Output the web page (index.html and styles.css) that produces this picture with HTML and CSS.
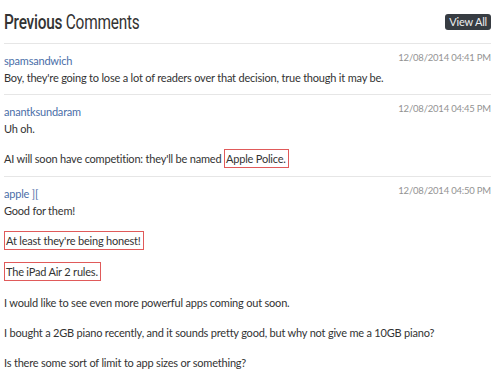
FILE: index.html
```html
<!DOCTYPE html>
<html lang="en">
<head>
    <meta charset="UTF-8">
    <meta name="viewport" content="width=device-width, initial-scale=1.0">
    <title>Previous Comments</title>
    <link rel="stylesheet" href="styles.css">
</head>
<body>
    <div class="container">
        <div class="comments-header">
            <h2 class="comments-title"><b>Previous</b> Comments</h2>
            <a href="#" class="button">View All</a>
        </div>

        <div class="comment">
            <div class="comment-meta">
                <a href="#" class="comment-author">spamsandwich</a>
                <span class="comment-date">12/08/2014 04:41 PM</span>
            </div>
            <p>Boy, they're going to lose a lot of readers over that decision, true though it may be.</p>
        </div>

        <div class="comment">
            <div class="comment-meta">
                <a href="#" class="comment-author">anantksundaram</a>
                <span class="comment-date">12/08/2014 04:45 PM</span>
            </div>
            <p>Uh oh.</p>
            <p>AI will soon have competition: they'll be named <span class="marked">Apple Police.</span></p>
        </div>

        <div class="comment">
            <div class="comment-meta">
                <a href="#" class="comment-author">apple ][</a>
                <span class="comment-date">12/08/2014 04:50 PM</span>
            </div>
            <p>Good for them!</p>
            <p><span class="marked">At least they're being honest!</span></p>
            <p><span class="marked">The iPad Air 2 rules.</span></p>
            <p>I would like to see even more powerful apps coming out soon.</p>
            <p>I bought a 2GB piano recently, and it sounds pretty good, but why not give me a 10GB piano?</p>
            <p>Is there some sort of limit to app sizes or something?</p>
        </div>
    </div>
</body>
</html>
```

FILE: styles.css
```css
body {
    font-family: Lato, sans-serif;
    background-color: #fff;
    margin: 0;
    padding: 0;
    color: #333;
}
.container {
    padding: 0 9px 0 4px;
}
.comments-header {
    display: flex;
    justify-content: space-between;
    align-items: center;
    height: 43px;
    border-bottom: 1px solid #e6e6e6;
}
.comments-title {
    margin: 0;
    font-family: Roboto, sans-serif;
    font-size: 20px;
    font-weight: 400;
    letter-spacing: -0.3px;
    color: #333;
    transform: scaleX(0.77);
    transform-origin: left center;
    white-space: nowrap;
}
.comments-title b {
    font-weight: 500;
}
.button {
    background-color: #373c42;
    color: #eee;
    padding: 2px 4px;
    border-radius: 3px;
    font-size: 11px;
    line-height: 12px;
    letter-spacing: -0.2px;
    text-decoration: none;
    margin-top: 1px;
}
.comment {
    padding: 8px 0 8px;
    border-bottom: 1px solid #e6e6e6;
    font-size: 11px;
    line-height: 17px;
    letter-spacing: -0.2px;
}
.comment:last-child {
    border-bottom: none;
}
.comment-meta {
    display: flex;
    justify-content: space-between;
    align-items: flex-start;
}
.comment-author {
    color: #4a6ea8;
    text-decoration: none;
}
.comment-date {
    color: #939393;
    font-size: 9.5px;
    line-height: 11px;
    letter-spacing: -0.2px;
}
.comment p {
    margin: 13px 0 0;
}
.comment .comment-meta + p {
    margin-top: 0;
}
.marked {
    display: inline-block;
    border: 1px solid #e05a5a;
    padding: 0 2px 0 1px;
    margin-top: -1px;
    line-height: 17px;
}
```
